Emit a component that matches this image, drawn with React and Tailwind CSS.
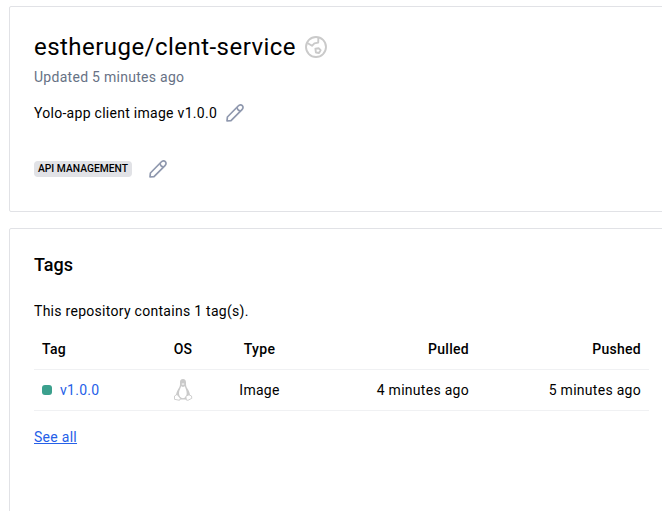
function Globe() {
  return (
    <svg className="h-6 w-6 shrink-0" viewBox="0 0 24 24" fill="none" stroke="#cacaca" strokeWidth="1.9" strokeLinejoin="round">
      <circle cx="12" cy="12" r="10" />
      <path d="M3.4 8 L8 10.8 L10.4 8.4 L14.2 7.6 L14.4 2.6" />
      <path d="M11.4 13.6 L14.6 13.2 L16.6 15.2 L15 18 L11.9 17.5 Z" />
    </svg>
  );
}

function Pencil() {
  return (
    <svg className="h-5 w-5 shrink-0" viewBox="0 0 20 20" fill="none" stroke="#8f98ae" strokeWidth="1.7" strokeLinejoin="round">
      <path d="M2 18 L2.4 14 L13.2 3 C14.5 1.7 16.2 1.6 17.3 2.7 C18.4 3.8 18.2 5.4 17 6.6 L6 17.6 Z" />
      <path d="M12.2 4.2 C12.1 6.4 13.5 7.9 15.8 7.8" />
    </svg>
  );
}

function Linux() {
  return (
    <svg className="h-6 w-6" viewBox="0 0 24 24" fill="none">
      <path d="M12 1 C9.8 1 8.9 2.4 9 4.5 C9.1 8 8.8 8.8 7 11.4 C5.8 13.4 5 15.8 4.8 18 L8 21.6 H16 L19.2 18 C19 15.8 18.3 13.4 17 11.4 C15.2 8.8 15 8 15 4.5 C15 2.2 14.1 1 12 1 Z" fill="#cacaca" />
      <path d="M10.2 8.2 L12 9 L13.8 8.2 C14.4 10.1 15.7 12.3 15.7 15.5 C15.7 18.2 14.4 20.2 12 20.2 C9.5 20.2 8 18.2 8 15.5 C8 12.3 9.6 10.1 10.2 8.2 Z" fill="white" />
      <path d="M10.3 6 L12 5 L13.7 6 L12 7.3 Z" fill="#eeeeee" />
      <path d="M3.5 18 L6 16.4 L9.4 20.2 L8.5 22.3 L3.5 21.3 Z M20.5 18 L18 16.8 L14.9 18.3 L15.3 22 L17 22.3 L20.8 20.3 Z" fill="white" stroke="#cacaca" strokeWidth=".9" strokeLinejoin="round" />
    </svg>
  );
}

export default function App() {
  return (
    <main className="h-[511px] w-[662px] overflow-hidden bg-white pl-[9px] pt-1.5 font-['Roboto',sans-serif] text-sm leading-5 tracking-[0.28px] text-black">
      <section className="mb-4 h-[206px] w-[670px] rounded-[2px] border border-[#e1e2e6] pl-6 pt-6">
        <div className="flex h-8 items-center gap-2">
          <h1 className="text-2xl leading-8 tracking-[0.46px]">estheruge/clent-service</h1>
          <Globe />
        </div>
        <p className="mt-1 text-[#677285]">Updated 5 minutes ago</p>
        <div className="mt-4 flex h-5 items-center gap-2">
          <p>Yolo-app client image v1.0.0</p>
          <Pencil />
        </div>
        <div className="mt-9 flex h-5 items-center gap-4">
          <span className="flex h-4 w-[98px] items-center justify-center whitespace-nowrap rounded bg-[#e1e2e6] text-[10.3px] font-medium leading-4 tracking-normal">API MANAGEMENT</span>
          <Pencil />
        </div>
      </section>
      <section className="h-[300px] w-[670px] rounded-[2px] border border-[#e1e2e6] pl-6 pt-6">
        <h2 className="text-lg font-medium leading-6 tracking-normal">Tags</h2>
        <p className="mt-6">This repository contains 1 tag(s).</p>
        <table className="mt-2 w-[615px] table-fixed border-collapse">
          <colgroup>
            <col className="w-[108px]" />
            <col className="w-[82px]" />
            <col className="w-[71px]" />
            <col className="w-[182px]" />
            <col />
          </colgroup>
          <thead>
            <tr className="h-10 border-b border-[#f0f1f3]">
              <th className="px-2 text-left font-medium">Tag</th>
              <th className="font-medium">OS</th>
              <th className="font-medium">Type</th>
              <th className="px-2 text-right font-medium">Pulled</th>
              <th className="px-2 text-right font-medium">Pushed</th>
            </tr>
          </thead>
          <tbody>
            <tr className="h-[41px] border-b border-[#f0f1f3]">
              <td className="px-2">
                <div className="flex items-center gap-2">
                  <span className="h-2.5 w-2.5 rounded-[3px] bg-[#3ba08d]" />
                  <a className="text-[#2560e8]">v1.0.0</a>
                </div>
              </td>
              <td><div className="flex justify-center"><Linux /></div></td>
              <td className="text-center">Image</td>
              <td className="px-2 text-right">4 minutes ago</td>
              <td className="px-2 text-right">5 minutes ago</td>
            </tr>
          </tbody>
        </table>
        <a className="mt-4 inline-block text-[#2560e8] underline">See all</a>
      </section>
    </main>
  );
}
